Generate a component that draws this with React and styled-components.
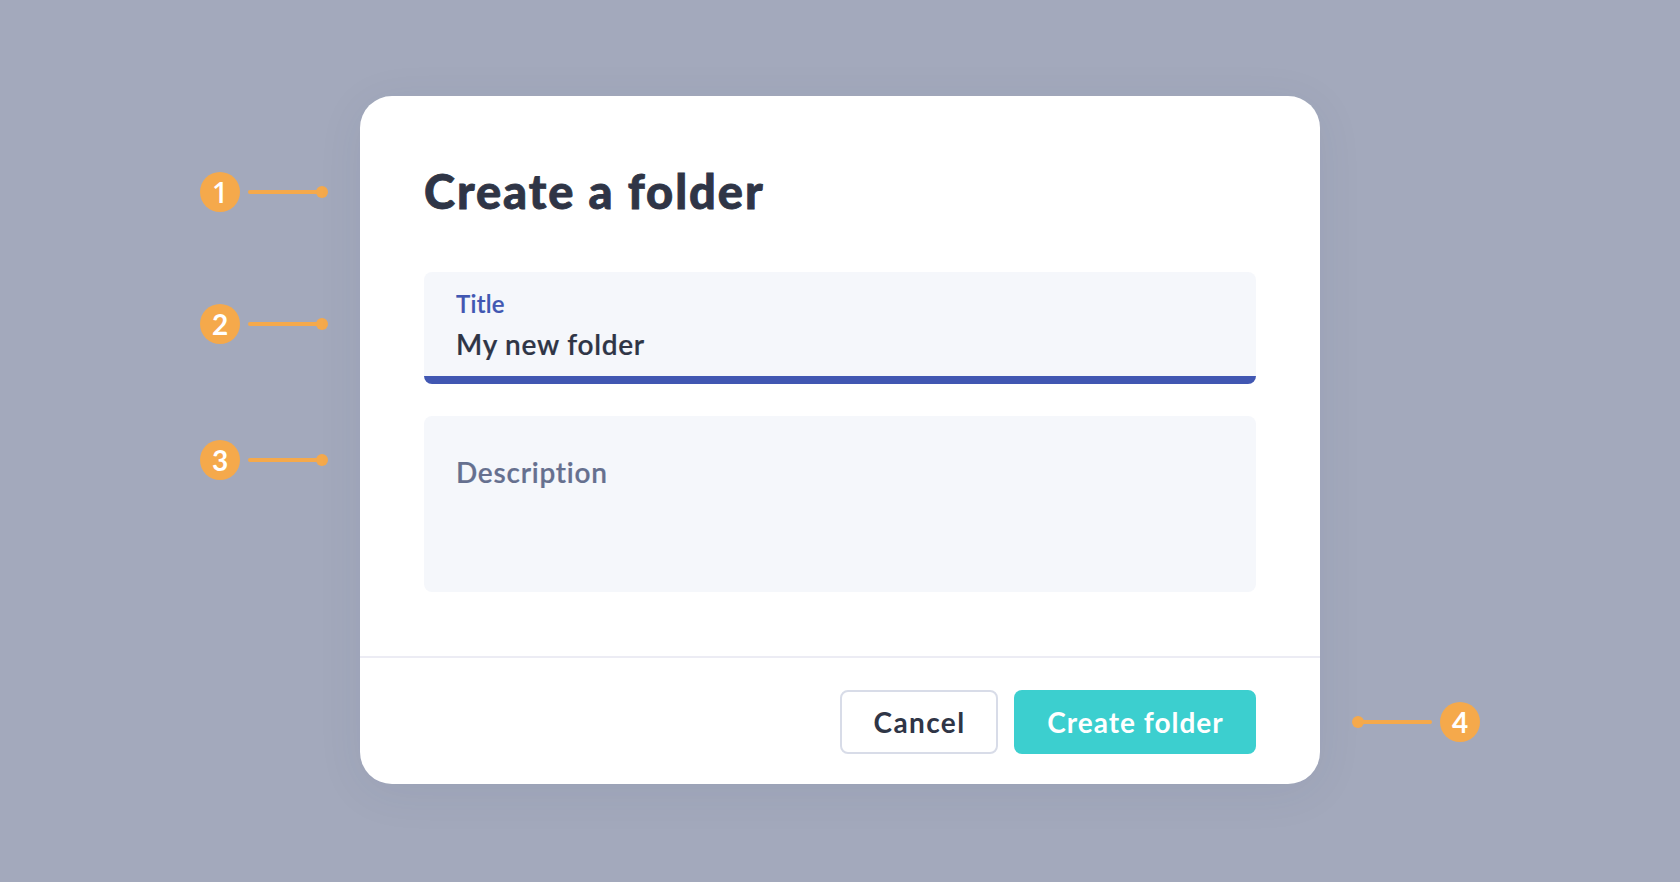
import React from "react";
import styled, { createGlobalStyle } from "styled-components";

const GlobalStyle = createGlobalStyle`
  *, *::before, *::after { box-sizing: border-box; }
  body {
    margin: 0;
    background: #a3a9bc;
    font-family: Lato, "Open Sans", sans-serif;
    -webkit-font-smoothing: antialiased;
  }
`;

const Stage = styled.main`
  display: grid;
  grid-template-columns: 1fr 960px 1fr;
  width: 1680px;
  height: 882px;
  background: #a3a9bc;
  overflow: hidden;
`;

const Rail = styled.aside`
  display: flex;
  flex-direction: column;
  align-items: ${(p) => (p.$side === "right" ? "flex-end" : "flex-start")};
  padding: ${(p) => (p.$side === "right" ? "702px 200px 0 0" : "172px 0 0 200px")};
`;

const Callout = styled.div`
  display: flex;
  flex-direction: ${(p) => (p.$flip ? "row-reverse" : "row")};
  align-items: center;
  gap: 8px;
  width: 128px;
  height: 40px;
  margin-bottom: ${(p) => p.$after || 0}px;
`;

const Badge = styled.span`
  width: 40px;
  height: 40px;
  border-radius: 50%;
  background: #f5a94b;
  color: #fff;
  font-family: ${(p) => (p.$plain ? '"Open Sans", sans-serif' : "Lato, sans-serif")};
  font-size: 28px;
  font-weight: ${(p) => (p.$plain ? 600 : 700)};
  line-height: 40px;
  text-align: center;
`;

const Leader = styled.span`
  display: flex;
  flex: 1;
  align-items: center;
  flex-direction: ${(p) => (p.$flip ? "row-reverse" : "row")};

  &::before {
    content: "";
    flex: 1;
    height: 4px;
    border-radius: 2px;
    background: #f5a94b;
    margin: ${(p) => (p.$flip ? "0 0 0 -3px" : "0 -3px 0 0")};
  }

  &::after {
    content: "";
    width: 12px;
    height: 12px;
    border-radius: 50%;
    background: #f5a94b;
  }
`;

const Dialog = styled.section`
  display: flex;
  flex-direction: column;
  height: 688px;
  margin-top: 96px;
  border-radius: 32px;
  background: #fff;
  box-shadow: 0 8px 48px rgba(47, 53, 100, 0.07);
`;

const Body = styled.div`
  flex: 1;
  padding: 63px 64px 0;
`;

const Heading = styled.h1`
  margin: 0 0 49px;
  color: #2f3546;
  font-size: 47px;
  font-weight: 900;
  line-height: 64px;
  letter-spacing: 1.95px;
  white-space: nowrap;
  -webkit-text-stroke: 0.8px #2f3546;
`;

const Field = styled.div`
  height: ${(p) => p.$height}px;
  margin-bottom: 32px;
  padding: ${(p) => p.$top}px 32px 0;
  overflow: hidden;
  border-radius: 8px;
  background: ${(p) =>
    p.$focused ? "linear-gradient(to top, #4157b2 8px, #f5f7fb 8px)" : "#f5f7fb"};
`;

const Label = styled.div`
  margin-bottom: 4px;
  color: #4157b2;
  font-size: 24px;
  font-weight: 600;
  line-height: 32px;
  letter-spacing: 0.25px;
  -webkit-text-stroke: 0.2px #4157b2;
`;

const Value = styled.div`
  color: ${(p) => (p.$muted ? "#66708f" : "#2f3546")};
  font-size: 28px;
  font-weight: 600;
  line-height: 40px;
  letter-spacing: 0.75px;
  -webkit-text-stroke: 0.2px currentColor;
`;

const Footer = styled.footer`
  display: flex;
  justify-content: flex-end;
  gap: 16px;
  height: 128px;
  padding: 32px 64px 0;
  border-top: 2px solid #ececf4;
`;

const Button = styled.button`
  width: ${(p) => p.$width}px;
  height: 64px;
  padding: 0;
  border: ${(p) => (p.$primary ? "0" : "2px solid #d8dce8")};
  border-radius: 8px;
  background: ${(p) => (p.$primary ? "#3ccfcf" : "#fff")};
  color: ${(p) => (p.$primary ? "#fff" : "#2f3546")};
  font: 700 28px/40px Lato, "Open Sans", sans-serif;
  letter-spacing: ${(p) => (p.$primary ? 1 : 1.4)}px;
  text-indent: 1px;
  white-space: nowrap;
`;

function Marker({ n, flip, after }) {
  return (
    <Callout $flip={flip} $after={after}>
      <Badge $plain={n === 1}>{n}</Badge>
      <Leader $flip={flip} />
    </Callout>
  );
}

export default function App() {
  return (
    <>
      <GlobalStyle />
      <Stage>
        <Rail>
          <Marker n={1} after={92} />
          <Marker n={2} after={96} />
          <Marker n={3} />
        </Rail>
        <Dialog role="dialog" aria-label="Create a folder">
          <Body>
            <Heading>Create a folder</Heading>
            <Field $height={112} $top={16} $focused>
              <Label>Title</Label>
              <Value>My new folder</Value>
            </Field>
            <Field $height={176} $top={36}>
              <Value $muted>Description</Value>
            </Field>
          </Body>
          <Footer>
            <Button $width={158}>Cancel</Button>
            <Button $width={242} $primary>Create folder</Button>
          </Footer>
        </Dialog>
        <Rail $side="right">
          <Marker n={4} flip />
        </Rail>
      </Stage>
    </>
  );
}
